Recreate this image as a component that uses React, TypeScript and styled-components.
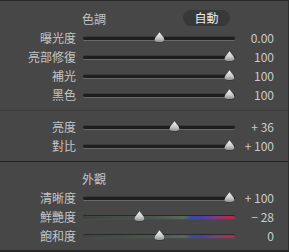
import React, { FC } from 'react';
import styled, { createGlobalStyle, css } from 'styled-components';

const GlobalStyle = createGlobalStyle`
    html, body {
        margin: 0;
        padding: 0;
        background: #474747;
    }
    body {
        font-family: 'Noto Sans CJK TC', 'Noto Sans', sans-serif;
        -webkit-font-smoothing: antialiased;
    }
`;

interface SliderRowProps {
    label: string;
    value: string;
    pos: number;
    colored?: boolean;
}

const Panel = styled.div`
    width: 289px;
    height: 252px;
    box-sizing: border-box;
    background: #474747;
    border-top: 1px solid #2a2a2a;
    border-right: 1px solid #2e2e2e;
    border-bottom: 2px solid #262626;
    display: flex;
    flex-direction: column;
    color: #c6c6c6;
    font-size: 12px;
`;

const Section = styled.div<{ $divider?: 'soft' | 'hard'; $fill?: boolean }>`
    padding: 6px 14px 6px 0;
    ${(props) =>
        props.$divider === 'soft' &&
        css`
            border-top: 1px solid #3b3b3b;
        `}
    ${(props) =>
        props.$divider === 'hard' &&
        css`
            border-top: 1px solid #1f1f1f;
        `}
    ${(props) =>
        props.$fill &&
        css`
            flex: 1;
        `}
`;

const FirstSection = styled(Section)`
    padding-top: 7px;
`;

const Grid = styled.div`
    display: grid;
    grid-template-columns: 76px 152px 1fr;
    column-gap: 7px;
    align-items: center;
`;

const Header = styled(Grid)`
    height: 20px;
`;

const HeaderBar = styled.div`
    display: flex;
    align-items: center;
`;

const Title = styled.span`
    margin-left: -1px;
    color: #c2c2c2;
`;

const AutoButton = styled.button`
    margin-left: auto;
    margin-right: 5px;
    width: 47px;
    height: 16px;
    border: none;
    border-radius: 8px;
    background: #383838;
    color: #ededed;
    font-family: inherit;
    font-size: 12px;
    line-height: 16px;
    padding: 0;
`;

const Row = styled(Grid)`
    height: 19px;
`;

const Label = styled.span`
    text-align: right;
    white-space: nowrap;
    line-height: 19px;
    color: #c4c4c4;
`;

const Value = styled.span`
    text-align: right;
    white-space: pre;
    line-height: 19px;
    color: #cbcbcb;
`;

const TrackSlot = styled.div`
    position: relative;
    height: 19px;
    display: flex;
    align-items: center;
    padding-top: 2px;
    box-sizing: border-box;
`;

const Track = styled.div<{ $colored?: boolean }>`
    position: relative;
    width: 100%;
    height: 3px;
    border-radius: 2px;
    background: #1e1e1e;
    box-shadow: 0 1px 0 #6a6a6a, 0 -1px 0 #3a3a3a;

    ${(props) =>
        props.$colored &&
        css`
            background: linear-gradient(
                to right,
                #3e453f 0%,
                #4a564c 45%,
                #566a5a 66%,
                #3a4aa0 72%,
                #4a3fa8 78%,
                #7a3890 86%,
                #a82e58 94%,
                #b52a42 100%
            );
            box-shadow: 0 1px 0 #4c4c4c, 0 -1px 0 #2a2a2a;
        `}
`;

const Thumb = styled.svg`
    position: absolute;
    top: -5px;
    width: 11px;
    height: 10px;
    overflow: visible;
`;

const SliderThumb: FC<{ pos: number }> = ({ pos }) => (
    <Thumb viewBox="0 0 11 10" style={{ left: `${pos * 140 + 0.5}px` }}>
        <defs>
            <linearGradient id="thumbFill" x1="0" y1="0" x2="0" y2="1">
                <stop offset="0" stopColor="#f4f4f4" />
                <stop offset="0.6" stopColor="#c9c9c9" />
                <stop offset="1" stopColor="#8e8e8e" />
            </linearGradient>
        </defs>
        <path d="M5.5 0.3 L9.6 5.6 Q11.2 7.8 9.4 9.4 Q5.5 10.6 1.6 9.4 Q-0.2 7.8 1.4 5.6 Z" fill="#262626" transform="translate(0.4 0.5)" opacity="0.7" />
        <path d="M5.5 0.3 L9.6 5.6 Q11.2 7.8 9.4 9.4 Q5.5 10.6 1.6 9.4 Q-0.2 7.8 1.4 5.6 Z" fill="url(#thumbFill)" />
    </Thumb>
);

const SliderRow: FC<SliderRowProps> = ({ label, value, pos, colored }) => (
    <Row>
        <Label>{label}</Label>
        <TrackSlot>
            <Track $colored={colored}>
                <SliderThumb pos={pos} />
            </Track>
        </TrackSlot>
        <Value>{value}</Value>
    </Row>
);

const App: FC = () => (
    <>
        <GlobalStyle />
        <Panel>
            <FirstSection>
                <Header>
                    <span />
                    <HeaderBar>
                        <Title>色調</Title>
                        <AutoButton>自動</AutoButton>
                    </HeaderBar>
                </Header>
                <SliderRow label="曝光度" value="0.00" pos={0.5} />
                <SliderRow label="亮部修復" value="100" pos={1} />
                <SliderRow label="補光" value="100" pos={1} />
                <SliderRow label="黑色" value="100" pos={1} />
            </FirstSection>
            <Section $divider="soft">
                <SliderRow label="亮度" value="+ 36" pos={0.614} />
                <SliderRow label="對比" value="+ 100" pos={1} />
            </Section>
            <Section $divider="hard" $fill>
                <Header>
                    <span />
                    <HeaderBar>
                        <Title>外觀</Title>
                    </HeaderBar>
                </Header>
                <SliderRow label="清晰度" value="+ 100" pos={1} />
                <SliderRow label="鮮艷度" value="− 28" pos={0.36} colored />
                <SliderRow label="飽和度" value="0" pos={0.5} colored />
            </Section>
        </Panel>
    </>
);

export default App;
